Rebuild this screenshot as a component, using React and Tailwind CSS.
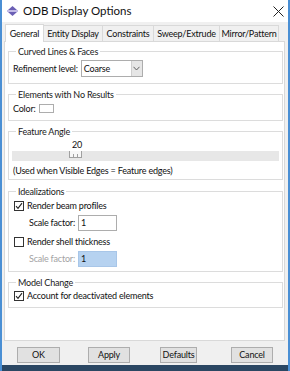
import React from "react";

const font = { fontFamily: 'Lato, "Noto Sans", sans-serif' };

const Check = ({ checked }) => (
  <span className="w-[10px] h-[10px] border border-[#333] bg-white flex items-center justify-center shrink-0">
    {checked && (
      <svg width="8" height="8" viewBox="0 0 8 8">
        <path d="M1 4.2 L3 6.3 L7 1.2" fill="none" stroke="#222" strokeWidth="1.1" />
      </svg>
    )}
  </span>
);

const Group = ({ title, h, mt, children }) => (
  <div className={`border border-[#dcdcdc] ml-[3px] w-[275px] flex flex-col ${h} ${mt}`}>
    <span className="block w-fit -mt-[7px] ml-[7px] px-[2px] bg-white leading-[13px] text-[#1a1a1a]">
      {title}
    </span>
    {children}
  </div>
);

const tabs = [
  { label: "General", w: "w-[39px]" },
  { label: "Entity Display", w: "w-[60px]" },
  { label: "Constraints", w: "w-[52px]" },
  { label: "Sweep/Extrude", w: "w-[67px]" },
  { label: "Mirror/Pattern", w: "w-[60px]" },
];

export default function App() {
  return (
    <div
      className="w-[290px] h-[371px] bg-[#f0f0f0] flex flex-col border-l-2 border-r-2 border-[#4a8fd4] text-[9px] tracking-[-0.2px] text-[#111] overflow-hidden"
      style={font}
    >
      {/* title bar */}
      <div className="h-[22px] bg-white flex items-center shrink-0">
        <svg width="11" height="10" viewBox="0 0 11 10" className="ml-[5px]">
          <path d="M5.5 0 L10 4 L1 4 Z" fill="#6b5fb5" />
          <path d="M5.5 10 L10 6 L1 6 Z" fill="#6b5fb5" />
          <rect x="0" y="4.4" width="11" height="1.2" fill="#9a8fd8" />
        </svg>
        <span className="ml-[5px] text-[11.5px] tracking-normal leading-[22px]">ODB Display Options</span>
        <svg width="11" height="11" viewBox="0 0 11 11" className="ml-auto mr-[4px]">
          <path d="M0.5 0.5 L10.5 10.5 M10.5 0.5 L0.5 10.5" stroke="#222" strokeWidth="1" />
        </svg>
      </div>

      {/* tabs */}
      <div className="flex items-end h-[19px] ml-[3px] shrink-0">
        {tabs.map((t, i) => (
          <div
            key={t.label}
            className={`${t.w} flex items-center justify-center border border-[#d9d9d9] ${
              i === 0
                ? "h-[18px] bg-white border-b-0 relative z-10 -mb-px"
                : "h-[16px] bg-[#f0f0f0] -ml-px border-b-0"
            }`}
          >
            <span className="leading-[13px] whitespace-nowrap">{t.label}</span>
          </div>
        ))}
      </div>

      {/* panel */}
      <div className="ml-[2px] w-[281px] h-[300px] bg-white border border-[#d9d9d9] flex flex-col pt-[9px] shrink-0">
        <Group title="Curved Lines & Faces" h="h-[33px]" mt="">
          <div className="flex items-center mt-[2px] ml-[4px]">
            <span>Refinement level:</span>
            <div className="ml-[3px] w-[62px] h-[17px] border border-[#adadad] bg-white flex items-center">
              <span className="ml-[2px] flex-1">Coarse</span>
              <div className="w-[11px] h-full bg-[#e6e6e6] border-l border-[#cfcfcf] flex items-center justify-center">
                <svg width="7" height="5" viewBox="0 0 7 5">
                  <path d="M0.5 0.8 L3.5 4 L6.5 0.8" fill="none" stroke="#606060" strokeWidth="1" />
                </svg>
              </div>
            </div>
          </div>
        </Group>

        <Group title="Elements with No Results" h="h-[27px]" mt="mt-[10px]">
          <div className="flex items-center mt-[1px] ml-[4px]">
            <span>Color:</span>
            <span className="ml-[3px] w-[15px] h-[9px] border border-[#adadad] bg-white" />
          </div>
        </Group>

        <Group title="Feature Angle" h="h-[49px]" mt="mt-[10px]">
          <div className="flex flex-col">
            <span className="ml-[63px] leading-[13px]">20</span>
            <div className="mx-[3px] h-[10px] bg-[#e7e7e7] flex">
              <div className="ml-[57px] w-[13px] h-[7px] bg-[#f7f7f7] border border-t-0 border-[#a0a0a0] flex items-end justify-center gap-[3px]">
                <span className="w-px h-[3px] bg-[#a0a0a0]" />
                <span className="w-px h-[3px] bg-[#a0a0a0]" />
              </div>
            </div>
            <span className="ml-[4px] mt-[3px] leading-[13px]">(Used when Visible Edges = Feature edges)</span>
          </div>
        </Group>

        <Group title="Idealizations" h="h-[81px]" mt="mt-[11px]">
          <div className="flex flex-col ml-[5px]">
            <div className="flex items-center gap-[3px] mt-[2px] h-[12px]">
              <Check checked />
              <span>Render beam profiles</span>
            </div>
            <div className="flex items-center mt-[3px] ml-[15px]">
              <span>Scale factor:</span>
              <div className="ml-[3px] w-[39px] h-[16px] border border-[#adadad] bg-white flex items-center pl-[2px]">
                1
              </div>
            </div>
            <div className="flex items-center gap-[3px] mt-[5px] h-[12px]">
              <Check />
              <span>Render shell thickness</span>
            </div>
            <div className="flex items-center mt-[3px] ml-[15px]">
              <span className="text-[#a3a3a3]">Scale factor:</span>
              <div className="ml-[3px] w-[39px] h-[16px] border border-[#a8c6e8] bg-[#b6d2f0] flex items-center pl-[2px]">
                1
              </div>
            </div>
          </div>
        </Group>

        <Group title="Model Change" h="h-[26px]" mt="mt-[10px]">
          <div className="flex items-center gap-[3px] ml-[5px] mt-[1px] h-[12px]">
            <Check checked />
            <span>Account for deactivated elements</span>
          </div>
        </Group>
      </div>

      {/* buttons */}
      <div className="flex items-center mt-[6px] h-[16px] shrink-0">
        <button className="ml-[15px] w-[43px] h-[16px] bg-[#e1e1e1] border border-[#adadad] leading-[14px]">OK</button>
        <button className="ml-[28px] w-[42px] h-[16px] bg-[#e1e1e1] border border-[#adadad] leading-[14px]">Apply</button>
        <button className="ml-[30px] w-[37px] h-[16px] bg-[#e1e1e1] border border-[#adadad] leading-[14px]">Defaults</button>
        <button className="ml-[34px] w-[42px] h-[16px] bg-[#e1e1e1] border border-[#adadad] leading-[14px]">Cancel</button>
      </div>

      <div className="mt-auto h-[6px] bg-[#2b4763] shrink-0" />
    </div>
  );
}
